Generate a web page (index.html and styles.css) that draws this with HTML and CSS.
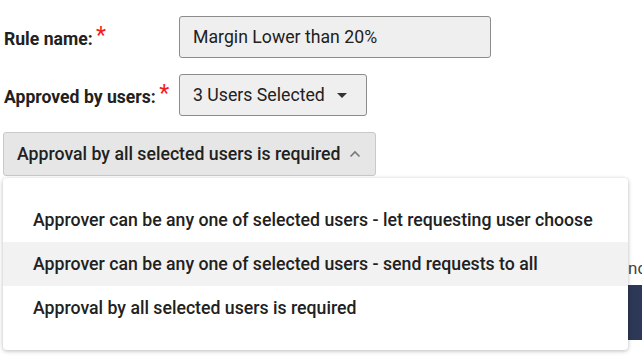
FILE: index.html
```html
<!DOCTYPE html>
<html>
<head>
<meta charset="utf-8">
<link rel="stylesheet" href="styles.css">
</head>
<body>
<div class="page">
  <div class="form">
    <div class="row">
      <label class="label">Rule name: <span class="req">*</span></label>
      <div class="input">Margin Lower than 20%</div>
    </div>
    <div class="row">
      <label class="label">Approved by users: <span class="req">*</span></label>
      <div class="select">
        <span>3 Users Selected</span>
        <svg class="caret" width="10" height="5" viewBox="0 0 10 5"><path d="M0 0h10L5 5z" fill="#333"/></svg>
      </div>
    </div>
    <div class="row">
      <div class="toggle">
        <span>Approval by all selected users is required</span>
        <svg class="chev" width="12" height="8" viewBox="0 0 12 8"><path d="M1.5 6.5L6 2l4.5 4.5" fill="none" stroke="#777" stroke-width="1.6"/></svg>
      </div>
    </div>
  </div>
  <div class="behind">
    <div class="behind-text">nc</div>
    <div class="behind-btn"></div>
  </div>
  <ul class="menu">
    <li class="item">Approver can be any one of selected users - let requesting user choose</li>
    <li class="item hover">Approver can be any one of selected users - send requests to all</li>
    <li class="item">Approval by all selected users is required</li>
  </ul>
</div>
</body>
</html>
```

FILE: styles.css
```css
html, body {
  margin: 0;
  padding: 0;
  background: #fff;
  overflow: hidden;
}
body {
  width: 642px;
  height: 356px;
  font-family: Roboto, "Noto Sans", sans-serif;
  color: #212121;
}
.page {
  position: relative;
  height: 356px;
}
.form {
  display: flex;
  flex-direction: column;
  gap: 16px;
  padding: 16px 0 0 3px;
}
.row {
  display: flex;
  align-items: center;
}
.label {
  width: 175px;
  padding-left: 1px;
  font-weight: 700;
  font-size: 17.6px;
  color: #212121;
  white-space: nowrap;
  position: relative;
  top: 0;
}
.req {
  color: #f31b1b;
  font-size: 23px;
  font-weight: 400;
  position: relative;
  top: -2px;
  margin-left: -1px;
}
.input {
  box-sizing: border-box;
  width: 312px;
  height: 42px;
  background: #efefef;
  border: 1px solid #8c8c8c;
  border-radius: 3px;
  padding: 0 13px;
  display: flex;
  align-items: center;
  font-size: 17.7px;
  color: #212121;
}
.select {
  box-sizing: border-box;
  width: 188px;
  height: 42px;
  background: #efefef;
  border: 1px solid #8c8c8c;
  border-radius: 3px;
  padding: 0 13px;
  display: flex;
  align-items: center;
  justify-content: space-between;
  font-size: 17.7px;
  color: #212121;
}
.caret {
  margin-right: 6px;
}
.toggle {
  box-sizing: border-box;
  width: 373px;
  height: 44px;
  background: #e6e6e6;
  border: 1px solid #c9c9c9;
  border-radius: 3px;
  padding: 0 13px;
  display: flex;
  align-items: center;
  gap: 9px;
  font-size: 17.7px;
  font-weight: 500;
  color: #212121;
}
.behind {
  margin: 82px 0 0 628px;
  display: flex;
  flex-direction: column;
  gap: 7px;
}
.behind-text {
  font-size: 17px;
  color: #444;
  white-space: nowrap;
}
.behind-btn {
  height: 55px;
  width: 40px;
  background: #2c3855;
}
.menu {
  position: absolute;
  left: 3px;
  top: 178px;
  width: 625px;
  margin: 0;
  padding: 20px 0;
  list-style: none;
  background: #fff;
  border-radius: 4px;
  box-shadow: 0 1px 4px rgba(0,0,0,0.28);
  box-sizing: border-box;
}
.item {
  height: 44px;
  display: flex;
  align-items: center;
  padding-left: 30px;
  font-size: 17.7px;
  font-weight: 500;
  color: #212121;
}
.item.hover {
  background: #f2f2f2;
}
```
